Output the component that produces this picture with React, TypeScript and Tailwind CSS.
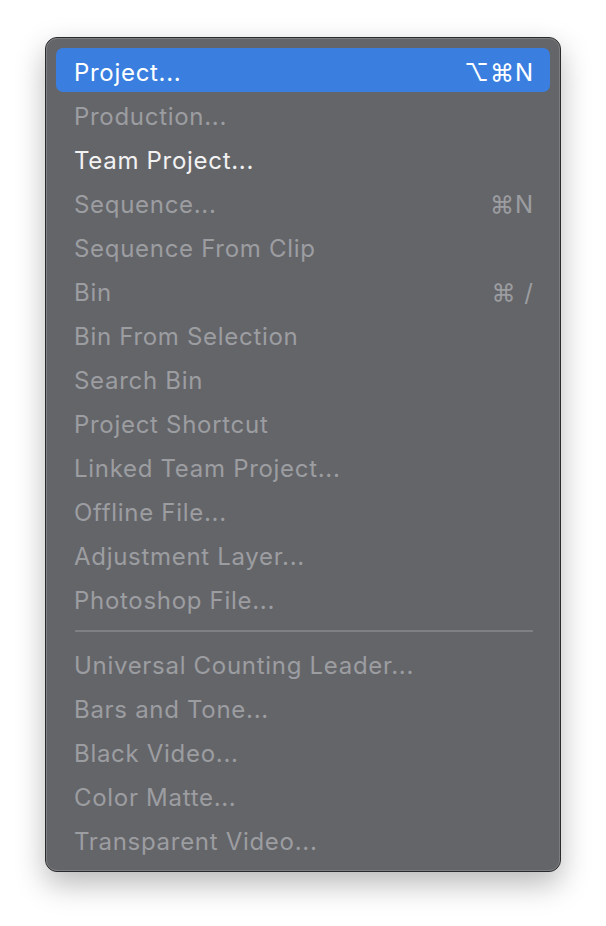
type Item = { label: string; shortcut?: string; enabled?: boolean; active?: boolean };

const top: Item[] = [
  { label: "Project...", shortcut: "⌥⌘N", active: true, enabled: true },
  { label: "Production..." },
  { label: "Team Project...", enabled: true },
  { label: "Sequence...", shortcut: "⌘N" },
  { label: "Sequence From Clip" },
  { label: "Bin", shortcut: "⌘ /" },
  { label: "Bin From Selection" },
  { label: "Search Bin" },
  { label: "Project Shortcut" },
  { label: "Linked Team Project..." },
  { label: "Offline File..." },
  { label: "Adjustment Layer..." },
  { label: "Photoshop File..." },
];

const bottom: Item[] = [
  { label: "Universal Counting Leader..." },
  { label: "Bars and Tone..." },
  { label: "Black Video..." },
  { label: "Color Matte..." },
  { label: "Transparent Video..." },
];

const Row = ({ item }: { item: Item }) => (
  <div
    className={
      item.active
        ? "flex h-[44px] items-center justify-between rounded-[7px] bg-[#3a7fe0] pt-[6px] pl-[18px] pr-[16px] text-white"
        : item.enabled
        ? "flex h-[44px] items-center justify-between pt-[6px] pl-[18px] pr-[16px] text-[#f2f2f3]"
        : "flex h-[44px] items-center justify-between pt-[6px] pl-[18px] pr-[16px] text-[#9c9da1]"
    }
  >
    <span className="tracking-[0.7px]">{item.label}</span>
    {item.shortcut && <span className="tracking-[1px]">{item.shortcut}</span>}
  </div>
);

export default function App() {
  return (
    <div className="min-h-[926px] bg-white pl-[45px] pt-[37px] font-['Inter','Noto_Sans',sans-serif] text-[24px]">
      <div className="w-[516px] rounded-[12px] border border-[#2a2a2c] bg-[#646569] shadow-[0_12px_30px_rgba(0,0,0,0.28)]">
        <div className="rounded-[11px] border border-[#7d7e82] px-[9px] pt-[9px] pb-[9px]">
          {top.map((it) => (
            <Row key={it.label} item={it} />
          ))}
          <div className="flex h-[21px] items-center pl-[19px] pr-[17px]">
            <div className="h-[2px] w-full bg-[#7f8084]" />
          </div>
          {bottom.map((it) => (
            <Row key={it.label} item={it} />
          ))}
        </div>
      </div>
    </div>
  );
}
